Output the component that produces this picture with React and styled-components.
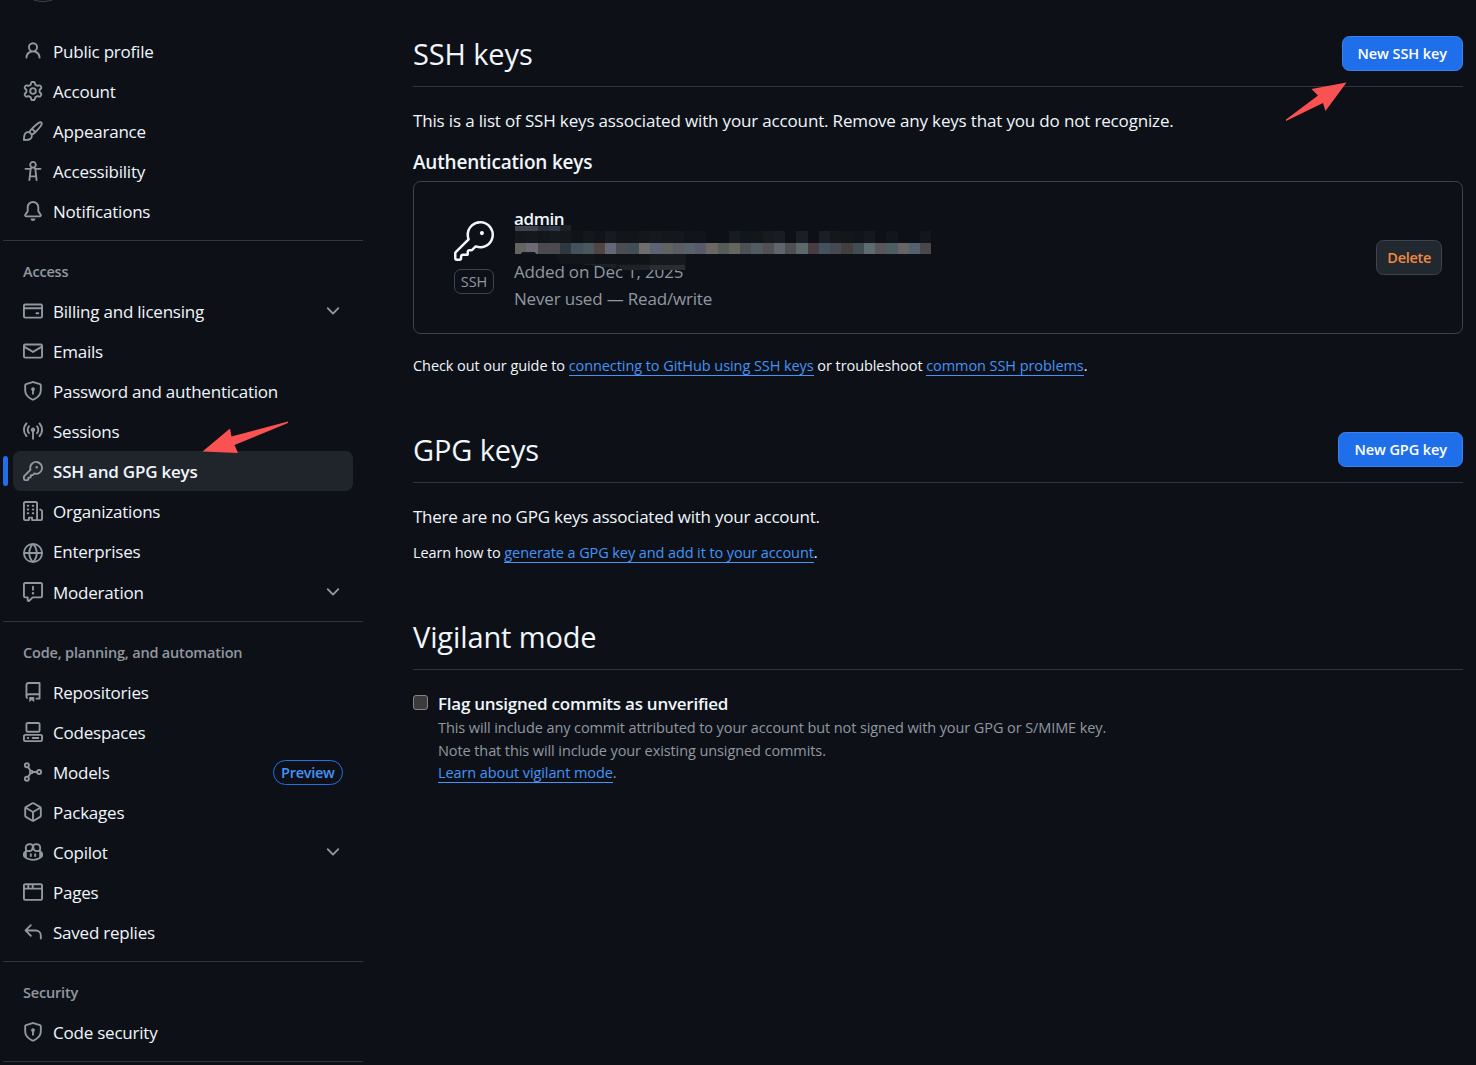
import { useState } from 'react'
import styled, { createGlobalStyle, css } from 'styled-components'
import { GoKey } from 'react-icons/go'

const ICONS = {
  person: 'M10.561 8.073a6.005 6.005 0 0 1 3.432 5.142.75.75 0 1 1-1.498.07 4.5 4.5 0 0 0-8.99 0 .75.75 0 0 1-1.498-.07 6.004 6.004 0 0 1 3.431-5.142 3.999 3.999 0 1 1 5.123 0ZM10.5 5a2.5 2.5 0 1 0-5 0 2.5 2.5 0 0 0 5 0Z',
  gear: 'M8 0a8.2 8.2 0 0 1 .701.031C9.444.095 9.99.645 10.16 1.29l.288 1.107c.018.066.079.158.212.224.231.114.454.243.668.386.123.082.233.09.299.071l1.103-.303c.644-.176 1.392.021 1.82.63.27.385.506.792.704 1.218.315.675.111 1.422-.364 1.891l-.814.806c-.049.048-.098.147-.088.294.016.257.016.515 0 .772-.01.147.038.246.088.294l.814.806c.475.469.679 1.216.364 1.891a7.977 7.977 0 0 1-.704 1.217c-.428.61-1.176.807-1.82.63l-1.102-.302c-.067-.019-.177-.011-.3.071a5.909 5.909 0 0 1-.668.386c-.133.066-.194.158-.211.224l-.29 1.106c-.168.646-.715 1.196-1.458 1.26a8.006 8.006 0 0 1-1.402 0c-.743-.064-1.289-.614-1.458-1.26l-.289-1.106c-.018-.066-.079-.158-.212-.224a5.738 5.738 0 0 1-.668-.386c-.123-.082-.233-.09-.299-.071l-1.103.303c-.644.176-1.392-.021-1.82-.63a8.12 8.12 0 0 1-.704-1.218c-.315-.675-.111-1.422.363-1.891l.815-.806c.05-.048.098-.147.088-.294a6.214 6.214 0 0 1 0-.772c.01-.147-.038-.246-.088-.294l-.815-.806C.635 6.045.431 5.298.746 4.623a7.92 7.92 0 0 1 .704-1.217c.428-.61 1.176-.807 1.82-.63l1.102.302c.067.019.177.011.3-.071.214-.143.437-.272.668-.386.133-.066.194-.158.211-.224l.29-1.106C6.009.645 6.556.095 7.299.03 7.53.01 7.764 0 8 0Zm-.571 1.525c-.036.003-.108.036-.137.146l-.289 1.105c-.147.561-.549.967-.998 1.189-.173.086-.34.183-.5.29-.417.278-.97.423-1.529.27l-1.103-.303c-.109-.03-.175.016-.195.045-.22.312-.412.644-.573.99-.014.031-.021.11.059.19l.815.806c.411.406.562.957.53 1.456a4.709 4.709 0 0 0 0 .582c.032.499-.119 1.05-.53 1.456l-.815.806c-.081.08-.073.159-.059.19.162.346.353.677.573.989.02.03.085.076.195.046l1.102-.303c.56-.153 1.113-.008 1.53.27.161.107.328.204.501.29.447.222.85.629.997 1.189l.289 1.105c.029.109.101.143.137.146a6.6 6.6 0 0 0 1.142 0c.036-.003.108-.036.137-.146l.289-1.105c.147-.561.549-.967.998-1.189.173-.086.34-.183.5-.29.417-.278.97-.423 1.529-.27l1.103.303c.109.029.175-.016.195-.045.22-.313.411-.644.573-.99.014-.031.021-.11-.059-.19l-.815-.806c-.411-.406-.562-.957-.53-1.456a4.709 4.709 0 0 0 0-.582c-.032-.499.119-1.05.53-1.456l.815-.806c.081-.08.073-.159.059-.19a6.464 6.464 0 0 0-.573-.989c-.02-.03-.085-.076-.195-.046l-1.102.303c-.56.153-1.113.008-1.53-.27a4.44 4.44 0 0 0-.501-.29c-.447-.222-.85-.629-.997-1.189l-.289-1.105c-.029-.11-.101-.143-.137-.146a6.6 6.6 0 0 0-1.142 0ZM11 8a3 3 0 1 1-6 0 3 3 0 0 1 6 0ZM9.5 8a1.5 1.5 0 1 0-3.001.001A1.5 1.5 0 0 0 9.5 8Z',
  paintbrush: 'M11.134 1.535c.7-.509 1.416-.942 2.076-1.155.649-.21 1.463-.267 2.069.34.603.601.568 1.411.368 2.07-.202.668-.624 1.39-1.125 2.096-1.011 1.424-2.496 2.987-3.775 4.249-1.098 1.084-2.132 1.839-3.04 2.3a3.744 3.744 0 0 1-1.055 3.217c-.431.431-1.065.691-1.657.861-.614.177-1.294.287-1.914.357A21.151 21.151 0 0 1 .797 16H.743l.007-.75H.749L.742 16a.75.75 0 0 1-.743-.742l.743-.008-.742.007v-.054a21.25 21.25 0 0 1 .13-2.284c.067-.647.187-1.287.358-1.914.17-.591.43-1.226.86-1.657a3.746 3.746 0 0 1 3.227-1.054c.466-.893 1.225-1.907 2.314-2.982 1.271-1.255 2.833-2.75 4.245-3.777ZM1.62 13.089c-.051.464-.086.929-.104 1.395.466-.018.932-.053 1.396-.104a10.511 10.511 0 0 0 1.668-.309c.526-.151.856-.325 1.011-.48a2.25 2.25 0 1 0-3.182-3.182c-.155.155-.329.485-.48 1.01a10.515 10.515 0 0 0-.309 1.67Zm10.396-10.34c-1.224.89-2.605 2.189-3.822 3.384l1.718 1.718c1.21-1.205 2.51-2.597 3.387-3.833.47-.662.78-1.227.912-1.662.134-.444.032-.551.009-.575h-.001V1.78c-.014-.014-.113-.113-.548.027-.432.14-.995.462-1.655.942Zm-4.832 7.266-.001.001a9.859 9.859 0 0 0 1.63-1.142L7.155 7.216a9.7 9.7 0 0 0-1.161 1.607c.482.302.889.71 1.19 1.192Z',
  accessibility: 'M9.923 5.302c.063.063.122.129.178.198H14a.75.75 0 0 1 0 1.5h-3.3l.578 5.163.362 2.997a.75.75 0 0 1-1.49.18L9.868 13H6.132l-.282 2.34a.75.75 0 0 1-1.49-.18l.362-2.997L5.3 7H2a.75.75 0 0 1 0-1.5h3.9a2.54 2.54 0 0 1 .176-.198 3 3 0 1 1 3.847 0ZM9.2 7.073h-.001a1.206 1.206 0 0 0-2.398 0L6.305 11.5h3.39ZM9.5 3a1.5 1.5 0 1 0-3.001.001A1.5 1.5 0 0 0 9.5 3Z',
  bell: 'M8 16a2 2 0 0 0 1.985-1.75c.017-.137-.097-.25-.235-.25h-3.5c-.138 0-.252.113-.235.25A2 2 0 0 0 8 16ZM3 5a5 5 0 0 1 10 0v2.947c0 .05.015.098.042.139l1.703 2.555A1.519 1.519 0 0 1 13.482 13H2.518a1.516 1.516 0 0 1-1.263-2.36l1.703-2.554A.255.255 0 0 0 3 7.947Zm5-3.5A3.5 3.5 0 0 0 4.5 5v2.947c0 .346-.102.683-.294.97l-1.703 2.556a.017.017 0 0 0-.003.01l.001.006c0 .002.002.004.004.006l.006.004.007.001h10.964l.007-.001.006-.004.004-.006.001-.007a.017.017 0 0 0-.003-.01l-1.703-2.554a1.745 1.745 0 0 1-.294-.97V5A3.5 3.5 0 0 0 8 1.5Z',
  card: 'M10.75 9a.75.75 0 0 0 0 1.5h1.5a.75.75 0 0 0 0-1.5h-1.5ZM0 3.75C0 2.784.784 2 1.75 2h12.5c.966 0 1.75.784 1.75 1.75v8.5A1.75 1.75 0 0 1 14.25 14H1.75A1.75 1.75 0 0 1 0 12.25ZM14.5 6.5h-13v5.75c0 .138.112.25.25.25h12.5a.25.25 0 0 0 .25-.25Zm0-2.75a.25.25 0 0 0-.25-.25H1.75a.25.25 0 0 0-.25.25V5h13Z',
  mail: 'M1.75 2h12.5c.966 0 1.75.784 1.75 1.75v8.5A1.75 1.75 0 0 1 14.25 14H1.75A1.75 1.75 0 0 1 0 12.25v-8.5C0 2.784.784 2 1.75 2ZM1.5 12.251c0 .138.112.25.25.25h12.5a.25.25 0 0 0 .25-.25V5.809L8.38 9.397a.75.75 0 0 1-.76 0L1.5 5.809v6.442Zm13-8.181v-.32a.25.25 0 0 0-.25-.25H1.75a.25.25 0 0 0-.25.25v.32L8 7.88Z',
  shield: 'm8.533.133 5.25 1.68A1.75 1.75 0 0 1 15 3.48V7c0 1.566-.32 3.182-1.303 4.682-.983 1.498-2.585 2.813-5.032 3.855a1.697 1.697 0 0 1-1.33 0c-2.447-1.042-4.049-2.357-5.032-3.855C1.32 10.182 1 8.566 1 7V3.48a1.75 1.75 0 0 1 1.217-1.667l5.25-1.68a1.748 1.748 0 0 1 1.066 0Zm-.61 1.429.001.001-5.25 1.68a.251.251 0 0 0-.174.237V7c0 1.36.275 2.666 1.057 3.859.784 1.194 2.121 2.342 4.366 3.298a.196.196 0 0 0 .154 0c2.245-.957 3.582-2.103 4.366-3.297C13.225 9.666 13.5 8.358 13.5 7V3.48a.25.25 0 0 0-.174-.238l-5.25-1.68a.25.25 0 0 0-.153 0ZM9.5 6.5c0 .536-.286 1.032-.75 1.3v2.45a.75.75 0 0 1-1.5 0V7.8A1.5 1.5 0 1 1 9.5 6.5Z',
  broadcast: 'M8.75 8.582v5.668a.75.75 0 0 1-1.5 0V8.582a1.75 1.75 0 1 1 1.5 0Zm3.983-7.125a.75.75 0 0 1 1.06.026A7.976 7.976 0 0 1 16 7c0 2.139-.84 4.083-2.207 5.517a.75.75 0 1 1-1.086-1.034A6.474 6.474 0 0 0 14.5 7a6.474 6.474 0 0 0-1.793-4.483.75.75 0 0 1 .026-1.06Zm-9.466 0c.3.286.312.76.026 1.06A6.474 6.474 0 0 0 1.5 7a6.47 6.47 0 0 0 1.793 4.483.75.75 0 0 1-1.086 1.034A7.973 7.973 0 0 1 0 7c0-2.139.84-4.083 2.207-5.517a.75.75 0 0 1 1.06-.026Zm8.556 2.321A4.988 4.988 0 0 1 13 7a4.988 4.988 0 0 1-1.177 3.222.75.75 0 1 1-1.146-.967A3.487 3.487 0 0 0 11.5 7c0-.86-.309-1.645-.823-2.255a.75.75 0 0 1 1.146-.967Zm-6.492.958A3.48 3.48 0 0 0 4.5 7a3.48 3.48 0 0 0 .823 2.255.75.75 0 0 1-1.146.967A4.981 4.981 0 0 1 3 7a4.982 4.982 0 0 1 1.188-3.236.75.75 0 1 1 1.143.972Z',
  key: 'M10.5 0a5.499 5.499 0 1 1-1.288 10.848l-.932.932a.749.749 0 0 1-.53.22H7v.75a.749.749 0 0 1-.22.53l-.5.5a.749.749 0 0 1-.53.22H5v.75a.749.749 0 0 1-.22.53l-.5.5a.749.749 0 0 1-.53.22h-2A1.75 1.75 0 0 1 0 14.25v-2c0-.199.079-.389.22-.53l4.932-4.932A5.5 5.5 0 0 1 10.5 0Zm-4 5.5c-.001.431.069.86.205 1.269a.75.75 0 0 1-.181.768L1.5 12.56v1.69c0 .138.112.25.25.25h1.69l.06-.06v-1.19a.75.75 0 0 1 .75-.75h1.19l.06-.06v-1.19a.75.75 0 0 1 .75-.75h1.19l1.023-1.025a.75.75 0 0 1 .768-.18A4 4 0 1 0 6.5 5.5ZM11 6a1 1 0 1 1 0-2 1 1 0 0 1 0 2Z',
  organization: 'M1.75 16A1.75 1.75 0 0 1 0 14.25V1.75C0 .784.784 0 1.75 0h8.5C11.216 0 12 .784 12 1.75v12.5c0 .085-.006.168-.018.25h2.268a.25.25 0 0 0 .25-.25V8.285a.25.25 0 0 0-.111-.208l-1.055-.703a.749.749 0 1 1 .832-1.248l1.055.703c.487.325.779.871.779 1.456v5.965A1.75 1.75 0 0 1 14.25 16h-3.5a.766.766 0 0 1-.197-.026c-.099.017-.2.026-.303.026h-3a.75.75 0 0 1-.75-.75V14h-1v1.25a.75.75 0 0 1-.75.75Zm-.25-1.75c0 .138.112.25.25.25H4v-1.25a.75.75 0 0 1 .75-.75h2.5a.75.75 0 0 1 .75.75v1.25h2.25a.25.25 0 0 0 .25-.25V1.75a.25.25 0 0 0-.25-.25h-8.5a.25.25 0 0 0-.25.25ZM3.75 6h.5a.75.75 0 0 1 0 1.5h-.5a.75.75 0 0 1 0-1.5ZM3 3.75A.75.75 0 0 1 3.75 3h.5a.75.75 0 0 1 0 1.5h-.5A.75.75 0 0 1 3 3.75Zm4 3A.75.75 0 0 1 7.75 6h.5a.75.75 0 0 1 0 1.5h-.5A.75.75 0 0 1 7 6.75ZM7.75 3h.5a.75.75 0 0 1 0 1.5h-.5a.75.75 0 0 1 0-1.5ZM3 9.75A.75.75 0 0 1 3.75 9h.5a.75.75 0 0 1 0 1.5h-.5A.75.75 0 0 1 3 9.75ZM7.75 9h.5a.75.75 0 0 1 0 1.5h-.5a.75.75 0 0 1 0-1.5Z',
  globe: 'M8 0a8 8 0 1 1 0 16A8 8 0 0 1 8 0ZM5.78 8.75a9.64 9.64 0 0 0 1.363 4.177c.255.426.542.832.857 1.215.245-.296.551-.705.857-1.215A9.64 9.64 0 0 0 10.22 8.75Zm4.44-1.5a9.64 9.64 0 0 0-1.363-4.177c-.307-.51-.612-.919-.857-1.215a9.927 9.927 0 0 0-.857 1.215A9.64 9.64 0 0 0 5.78 7.25Zm-5.944 1.5H1.543a6.507 6.507 0 0 0 4.666 5.5c-.123-.181-.24-.365-.352-.552-.715-1.192-1.437-2.874-1.581-4.948Zm-2.733-1.5h2.733c.144-2.074.866-3.756 1.58-4.948.12-.197.237-.381.353-.552a6.507 6.507 0 0 0-4.666 5.5Zm10.181 1.5c-.144 2.074-.866 3.756-1.58 4.948-.12.197-.237.381-.353.552a6.507 6.507 0 0 0 4.666-5.5Zm2.733-1.5a6.507 6.507 0 0 0-4.666-5.5c.123.181.24.365.353.552.714 1.192 1.436 2.874 1.58 4.948Z',
  report: 'M0 1.75C0 .784.784 0 1.75 0h12.5C15.216 0 16 .784 16 1.75v9.5A1.75 1.75 0 0 1 14.25 13H8.06l-2.573 2.573A1.458 1.458 0 0 1 3 14.543V13H1.75A1.75 1.75 0 0 1 0 11.25Zm1.75-.25a.25.25 0 0 0-.25.25v9.5c0 .138.112.25.25.25h2a.75.75 0 0 1 .75.75v2.19l2.72-2.72a.749.749 0 0 1 .53-.22h6.5a.25.25 0 0 0 .25-.25v-9.5a.25.25 0 0 0-.25-.25Zm7 2.25v2.5a.75.75 0 0 1-1.5 0v-2.5a.75.75 0 0 1 1.5 0ZM9 9a1 1 0 1 1-2 0 1 1 0 0 1 2 0Z',
  repo: 'M2 2.5A2.5 2.5 0 0 1 4.5 0h8.75a.75.75 0 0 1 .75.75v12.5a.75.75 0 0 1-.75.75h-2.5a.75.75 0 0 1 0-1.5h1.75v-2h-8a1 1 0 0 0-.714 1.7.75.75 0 1 1-1.072 1.05A2.495 2.495 0 0 1 2 11.5Zm10.5-1h-8a1 1 0 0 0-1 1v6.708A2.486 2.486 0 0 1 4.5 9h8ZM5 12.25a.25.25 0 0 1 .25-.25h3.5a.25.25 0 0 1 .25.25v3.25a.25.25 0 0 1-.4.2l-1.45-1.087a.249.249 0 0 0-.3 0L5.4 15.7a.25.25 0 0 1-.4-.2Z',
  codespaces: 'M0 11.25c0-.966.784-1.75 1.75-1.75h12.5c.966 0 1.75.784 1.75 1.75v3A1.75 1.75 0 0 1 14.25 16H1.75A1.75 1.75 0 0 1 0 14.25Zm2-9.5C2 .784 2.784 0 3.75 0h8.5C13.216 0 14 .784 14 1.75v5a1.75 1.75 0 0 1-1.75 1.75h-8.5A1.75 1.75 0 0 1 2 6.75Zm1.75-.25a.25.25 0 0 0-.25.25v5c0 .138.112.25.25.25h8.5a.25.25 0 0 0 .25-.25v-5a.25.25 0 0 0-.25-.25Zm-2 9.5a.25.25 0 0 0-.25.25v3c0 .138.112.25.25.25h12.5a.25.25 0 0 0 .25-.25v-3a.25.25 0 0 0-.25-.25ZM7 12.75a.75.75 0 0 1 .75-.75h4.5a.75.75 0 0 1 0 1.5h-4.5a.75.75 0 0 1-.75-.75Zm-4 0a.75.75 0 0 1 .75-.75h.5a.75.75 0 0 1 0 1.5h-.5a.75.75 0 0 1-.75-.75Z',
  package: 'm8.878.392 5.25 3.045c.54.314.872.89.872 1.514v6.098a1.75 1.75 0 0 1-.872 1.514l-5.25 3.045a1.75 1.75 0 0 1-1.756 0l-5.25-3.045A1.75 1.75 0 0 1 1 11.049V4.951c0-.624.332-1.201.872-1.514L7.122.392a1.75 1.75 0 0 1 1.756 0ZM7.875 1.69l-4.63 2.685L8 7.133l4.755-2.758-4.63-2.685a.248.248 0 0 0-.25 0ZM2.5 5.677v5.372c0 .09.047.171.125.216l4.625 2.683V8.432Zm6.25 8.271 4.625-2.683a.25.25 0 0 0 .125-.216V5.677L8.75 8.432Z',
  copilot: 'M7.998 15.035c-4.562 0-7.873-2.914-7.998-3.749V9.338c.085-.628.677-1.686 1.588-2.065.013-.07.024-.143.036-.218.029-.183.06-.384.126-.612-.201-.508-.254-1.084-.254-1.656 0-.87.128-1.769.693-2.484.579-.733 1.494-1.124 2.724-1.261 1.206-.134 2.262.034 2.944.765.05.053.096.108.139.165.044-.057.094-.112.143-.165.682-.731 1.738-.899 2.944-.765 1.23.137 2.145.528 2.724 1.261.566.715.693 1.614.693 2.484 0 .572-.053 1.148-.254 1.656.066.228.098.429.126.612.012.076.024.148.037.218.924.385 1.522 1.471 1.591 2.095v1.872c0 .766-3.351 3.795-8.002 3.795Zm0-1.485c2.28 0 4.584-1.11 5.002-1.433V7.862l-.023-.116c-.49.21-1.075.291-1.727.291-1.146 0-2.059-.327-2.71-.991A3.222 3.222 0 0 1 8 6.303a3.24 3.24 0 0 1-.544.743c-.65.664-1.563.991-2.71.991-.652 0-1.236-.081-1.727-.291l-.023.116v4.255c.419.323 2.722 1.433 5.002 1.433ZM6.762 2.83c-.193-.206-.637-.413-1.682-.297-1.019.113-1.479.404-1.713.7-.247.312-.369.789-.369 1.554 0 .793.129 1.171.308 1.371.162.181.519.379 1.442.379.853 0 1.339-.235 1.638-.54.315-.322.527-.827.617-1.553.117-.935-.037-1.395-.241-1.614Zm4.155-.297c-1.044-.116-1.488.091-1.681.297-.204.219-.359.679-.242 1.614.091.726.303 1.231.618 1.553.299.305.784.54 1.638.54.922 0 1.28-.198 1.442-.379.179-.2.308-.578.308-1.371 0-.765-.123-1.242-.37-1.554-.233-.296-.693-.587-1.713-.7ZM6.25 9.037a.75.75 0 0 1 .75.75v1.501a.75.75 0 0 1-1.5 0V9.787a.75.75 0 0 1 .75-.75Zm4.25.75v1.501a.75.75 0 0 1-1.5 0V9.787a.75.75 0 0 1 1.5 0Z',
  browser: 'M0 2.75C0 1.784.784 1 1.75 1h12.5c.966 0 1.75.784 1.75 1.75v10.5A1.75 1.75 0 0 1 14.25 15H1.75A1.75 1.75 0 0 1 0 13.25ZM14.5 6h-13v7.25c0 .138.112.25.25.25h12.5a.25.25 0 0 0 .25-.25Zm-6-3.5v2h6V2.75a.25.25 0 0 0-.25-.25ZM5 2.5v2h2v-2Zm-3.25 0a.25.25 0 0 0-.25.25V4.5h2v-2Z',
  reply: 'M6.78 1.97a.75.75 0 0 1 0 1.06L3.81 6h6.44A4.75 4.75 0 0 1 15 10.75v2.5a.75.75 0 0 1-1.5 0v-2.5a3.25 3.25 0 0 0-3.25-3.25H3.81l2.97 2.97a.749.749 0 0 1-.326 1.275.749.749 0 0 1-.734-.215L1.47 7.28a.75.75 0 0 1 0-1.06l4.25-4.25a.75.75 0 0 1 1.06 0Z',
  chevron: 'M12.78 5.22a.749.749 0 0 1 0 1.06l-4.25 4.25a.749.749 0 0 1-1.06 0L3.22 6.28a.749.749 0 1 1 1.06-1.06L8 8.939l3.72-3.719a.749.749 0 0 1 1.06 0Z',
}

const GROUPS = [
  {
    items: [
      { icon: 'person', label: 'Public profile' },
      { icon: 'gear', label: 'Account' },
      { icon: 'paintbrush', label: 'Appearance' },
      { icon: 'accessibility', label: 'Accessibility' },
      { icon: 'bell', label: 'Notifications' },
    ],
  },
  {
    title: 'Access',
    items: [
      { icon: 'card', label: 'Billing and licensing', expandable: true },
      { icon: 'mail', label: 'Emails' },
      { icon: 'shield', label: 'Password and authentication' },
      { icon: 'broadcast', label: 'Sessions' },
      { icon: 'key', label: 'SSH and GPG keys' },
      { icon: 'organization', label: 'Organizations' },
      { icon: 'globe', label: 'Enterprises', tall: true },
      { icon: 'report', label: 'Moderation', expandable: true },
    ],
  },
  {
    title: 'Code, planning, and automation',
    items: [
      { icon: 'repo', label: 'Repositories' },
      { icon: 'codespaces', label: 'Codespaces' },
      { icon: 'model', label: 'Models', badge: 'Preview' },
      { icon: 'package', label: 'Packages' },
      { icon: 'copilot', label: 'Copilot', expandable: true },
      { icon: 'browser', label: 'Pages' },
      { icon: 'reply', label: 'Saved replies' },
    ],
  },
  {
    title: 'Security',
    items: [{ icon: 'shield', label: 'Code security' }],
  },
]

// 모자이크 색상 (한 칸 11.25px)
const MOSAIC_MAIN = [
  '#646460', '#6b6a76', '#4a4a50', '#4a4a50', '#30383f', '#43515a', '#4a585c', '#4f4543', '#636878', '#4c4c53',
  '#424e56', '#6e6e6c', '#5a6474', '#60635f', '#5a5c66', '#56636b', '#585a6c', '#6b6763', '#555c5a', '#66665f',
  '#4c5153', '#515b64', '#525055', '#60646b', '#4b5052', '#5b696c', '#4a3d42', '#43525f', '#454855', '#423f3e',
  '#414c53', '#5c6c70', '#59565b', '#4e5c64', '#696464', '#526171', '#4c484a',
]
const MOSAIC_TOP = [
  '#14171b', '#15191d', '#13171c', '#15191c', '#14181d', '#101318', '#14181c', '#111418', '#171a20', '#12161b',
  '#12161b', '#14181d', '#161a1f', '#14181c', '#14181e', '#101419', '#11151b', '#0d1117', '#0d1117', '#171b22',
  '#11161b', '#13171a', '#171b21', '#191c24', '#0d1117', '#1a1f26', '#0d1117', '#1a1f26', '#14181a', '#14171a',
  '#10151b', '#141820', '#0e1216', '#11151c', '#0d1117', '#0d1117', '#13161a',
]

const Icon = ({ name, size = 20 }) => (
  <svg width={size} height={size} viewBox="0 0 16 16" fill="currentColor">
    {name === 'model' ? (
      <g fill="none" stroke="currentColor" strokeWidth="1.5">
        <circle cx="3.1" cy="2.6" r="1.6" />
        <circle cx="3.1" cy="13.4" r="1.6" />
        <circle cx="12.9" cy="8" r="1.6" />
        <circle cx="6.6" cy="8" r="1.1" />
        <path d="M3.9 3.9 6 7M3.9 12.1 6 9M7.7 8h3.6" />
      </g>
    ) : (
      <path d={ICONS[name]} />
    )}
  </svg>
)

const Mosaic = () => (
  <MosaicLayer width="430" height="52" shapeRendering="crispEdges">
    <path d="M60 28h111v17H110L78 40 60 34z" fill="#14171c" />
    <path d="M0 1h23v5H0z" fill="#3f424d" />
    <path d="M23 1h11v5H23z" fill="#252d38" />
    <path d="M34 1h11v5H34z" fill="#2a3746" />
    <path d="M45 0h11v6H45z" fill="#1c2027" />
    {MOSAIC_TOP.map((c, i) => (
      <rect key={i} x={i * 11.25} y="6" width="11.25" height="12" fill={c} />
    ))}
    {MOSAIC_MAIN.map((c, i) => (
      <rect key={i} x={i * 11.25} y="18" width="11.25" height="11" fill={c} />
    ))}
    <path d="M5 29l3-2h11l3 2z" fill="#14171c" />
    <path d="M40 29h39v10H45z" fill="#12151a" />
    <path d="M79 29h56v10H79z" fill="#101419" />
    <path d="M135 29h34v11h-34z" fill="#16191e" />
    <path d="M65 39h36v4l-20-2z" fill="#1d2026" />
    <path d="M101 40h34v5h-25z" fill="#202227" />
    <path d="M135 40h35v5h-35z" fill="#2c2d32" />
  </MosaicLayer>
)

const App = () => {
  const [current, setCurrent] = useState('SSH and GPG keys')
  const [isFlagged, setIsFlagged] = useState(false)

  return (
    <Page>
      <GlobalStyle />
      <Sidebar>
        <AvatarArea><Avatar /></AvatarArea>
        {GROUPS.map((group, i) => (
          <NavGroup key={i}>
            {group.title && <GroupTitle>{group.title}</GroupTitle>}
            {group.items.map((item) => (
              <NavItem key={item.label} $active={item.label === current} $tall={item.tall} onClick={() => setCurrent(item.label)}>
                <NavIcon $low={item.tall}><Icon name={item.icon} /></NavIcon>
                <NavLabel>{item.label}</NavLabel>
                {item.badge && <Badge>{item.badge}</Badge>}
                {item.expandable && <NavIcon><Icon name="chevron" /></NavIcon>}
              </NavItem>
            ))}
          </NavGroup>
        ))}
      </Sidebar>

      <Main>
        <Section>
          <Subhead>
            <Title>SSH keys</Title>
            <Button $primary>New SSH key</Button>
          </Subhead>
          <Paragraph>This is a list of SSH keys associated with your account. Remove any keys that you do not recognize.</Paragraph>
          <ListTitle>Authentication keys</ListTitle>
          <KeyCard>
            <KeyType>
              <GoKey size={40} />
              <KeyTag>SSH</KeyTag>
            </KeyType>
            <KeyInfo>
              <KeyName>admin</KeyName>
              <KeyHash />
              <KeyMeta>Added on Dec 1, 2025</KeyMeta>
              <KeyMeta>Never used — Read/write</KeyMeta>
              <Mosaic />
            </KeyInfo>
            <Button $danger>Delete</Button>
          </KeyCard>
          <Note>
            Check out our guide to <Link>connecting to GitHub using SSH keys</Link> or troubleshoot <Link>common SSH problems</Link>.
          </Note>
        </Section>

        <Section $top="55px">
          <Subhead>
            <Title>GPG keys</Title>
            <Button $primary>New GPG key</Button>
          </Subhead>
          <Paragraph $tracking="-0.24px">There are no GPG keys associated with your account.</Paragraph>
          <Note $tight>
            Learn how to <Link>generate a GPG key and add it to your account</Link>.
          </Note>
        </Section>

        <Section $top="55px">
          <Subhead>
            <Title>Vigilant mode</Title>
          </Subhead>
          <CheckRow>
            <Checkbox type="checkbox" checked={isFlagged} onChange={(e) => setIsFlagged(e.target.checked)} />
            <div>
              <CheckLabel>Flag unsigned commits as unverified</CheckLabel>
              <Hint>This will include any commit attributed to your account but not signed with your GPG or S/MIME key.</Hint>
              <Hint>Note that this will include your existing unsigned commits.</Hint>
              <Hint><Link>Learn about vigilant mode</Link>.</Hint>
            </div>
          </CheckRow>
        </Section>
      </Main>

      <Arrows width="1476" height="1065" fill="#fa5252">
        <path d="M202.5 451.5 230 428.5 231.5 436.5 288 421.5 288 423 234.5 445 238 453z" />
        <path d="M1346.5 82.5 1311.5 89 1318 95.5 1286 119.5 1286 121 1323 103 1325.5 111z" />
      </Arrows>
    </Page>
  )
}

const GlobalStyle = createGlobalStyle`
  * {
    box-sizing: border-box;
  }

  body {
    margin: 0;
    background: #0d1117;
    color: #f0f6fc;
    font-family: "Open Sans", "Noto Sans", sans-serif;
    font-size: 17px;
    overflow: hidden;
  }
`

const Page = styled.div`
  position: relative;
  display: flex;
  width: 1476px;
  height: 1065px;
  overflow: hidden;
`

const Sidebar = styled.nav`
  width: 360px;
  margin-left: 3px;
  flex-shrink: 0;
`

const AvatarArea = styled.div`
  height: 22px;
  padding-left: 10px;
  display: flex;
  align-items: flex-start;
`

const Avatar = styled.div`
  width: 60px;
  height: 60px;
  margin-top: -58px;
  border: 1px solid #3d444d;
  border-radius: 50%;
`

const NavGroup = styled.div`
  padding: 9px 10px;
  border-bottom: 1px solid #2f353d;

  & + & {
    padding-top: 10px;
  }
`

const GroupTitle = styled.div`
  height: 40px;
  padding-left: 10px;
  line-height: 41px;
  font-size: 14.5px;
  font-weight: 600;
  letter-spacing: -0.18px;
  color: #9198a1;
`

const NavItem = styled.div`
  position: relative;
  display: flex;
  align-items: center;
  gap: 10px;
  height: 40px;
  padding: 0 10px;
  border-radius: 7.5px;
  cursor: pointer;

  ${({ $tall }) => $tall && css`
    height: 41px;
    padding-bottom: 1px;
  `}

  ${({ $active }) => $active && css`
    background: #20252c;
    font-weight: 600;

    &::before {
      content: '';
      position: absolute;
      left: -10px;
      top: 5px;
      width: 5px;
      height: 30px;
      border-radius: 7.5px;
      background: #1f6feb;
    }
  `}
`

const NavIcon = styled.span`
  display: flex;
  color: #9198a1;
  margin-top: ${({ $low }) => ($low ? '4px' : 0)};
`

const NavLabel = styled.span`
  flex: 1;
  margin-top: 2px;
  line-height: 24px;
  letter-spacing: -0.22px;
  white-space: nowrap;
`

const Badge = styled.span`
  height: 25px;
  padding: 0 7.5px;
  border: 1px solid #1f6feb;
  border-radius: 13px;
  line-height: 23px;
  font-size: 14.5px;
  font-weight: 600;
  letter-spacing: -0.3px;
  color: #4493f8;
`

const Main = styled.main`
  width: 1050px;
  margin-left: 50px;
  padding-top: 36px;
`

const Section = styled.section`
  margin-top: ${({ $top }) => $top || 0};
`

const Subhead = styled.div`
  display: flex;
  justify-content: space-between;
  align-items: flex-start;
  height: 51px;
  border-bottom: 1px solid #2f353d;
`

const Title = styled.h2`
  margin: 0;
  line-height: 35px;
  font-size: 29px;
  font-weight: 400;
  letter-spacing: -0.12px;
`

const Button = styled.button`
  height: 35px;
  padding: 0 15px;
  border: 1px solid #3d444d;
  border-radius: 7.5px;
  background: #212830;
  color: #f0f6fc;
  font-family: inherit;
  font-size: 14.5px;
  font-weight: 600;
  letter-spacing: -0.3px;
  cursor: pointer;

  ${({ $primary }) => $primary && css`
    background: #1f6feb;
    border-color: #3b82f0;
    color: #fff;
    letter-spacing: -0.08px;
  `}

  ${({ $danger }) => $danger && css`
    padding: 0 10px;
    color: #f0883e;
  `}
`

const Paragraph = styled.p`
  margin: 20px 0 0;
  line-height: 27px;
  letter-spacing: ${({ $tracking }) => $tracking || '-0.16px'};
`

const ListTitle = styled.h3`
  margin: 13px 0 0;
  line-height: 30px;
  font-size: 19px;
  font-weight: 600;
  letter-spacing: -0.2px;
`

const KeyCard = styled.div`
  display: flex;
  align-items: center;
  height: 153px;
  margin-top: 4px;
  padding: 0 20px 0 40px;
  border: 1px solid #3d444d;
  border-radius: 7.5px;
`

const KeyType = styled.div`
  display: flex;
  flex-direction: column;
  gap: 8px;
  width: 40px;
`

const KeyTag = styled.span`
  height: 25px;
  border: 1px solid #3d444d;
  border-radius: 7px;
  line-height: 23px;
  text-align: center;
  font-size: 14.5px;
  color: #9198a1;
`

const KeyInfo = styled.div`
  position: relative;
  flex: 1;
  margin: 2px 0 0 20px;
`

const KeyName = styled.div`
  line-height: 26px;
  font-weight: 600;
  letter-spacing: -0.4px;
`

const KeyHash = styled.div`
  height: 26px;
`

const KeyMeta = styled.div`
  line-height: 27px;
  letter-spacing: -0.18px;
  color: #9198a1;
`

const MosaicLayer = styled.svg`
  position: absolute;
  left: 1px;
  top: 19px;
`

const Note = styled.p`
  margin: ${({ $tight }) => ($tight ? '11px' : '20px')} 0 0;
  line-height: 23px;
  font-size: 14.5px;
  letter-spacing: ${({ $tight }) => ($tight ? '-0.1px' : '-0.07px')};
`

const Link = styled.a`
  border-bottom: 1px solid #4493f8;
  color: #4493f8;
  cursor: pointer;
`

const CheckRow = styled.div`
  display: flex;
  gap: 10px;
  margin-top: 20px;
`

const Checkbox = styled.input`
  appearance: none;
  width: 15px;
  height: 15px;
  margin: 5px 0 0;
  border: 1px solid #858585;
  border-radius: 3px;
  background: #3b3b3b;
`

const CheckLabel = styled.div`
  line-height: 27px;
  font-weight: 600;
  letter-spacing: -0.25px;
`

const Hint = styled.div`
  line-height: 22.5px;
  font-size: 14.5px;
  letter-spacing: -0.09px;
  color: #9198a1;
`

const Arrows = styled.svg`
  position: absolute;
  top: 0;
  left: 0;
  pointer-events: none;
`

export default App
